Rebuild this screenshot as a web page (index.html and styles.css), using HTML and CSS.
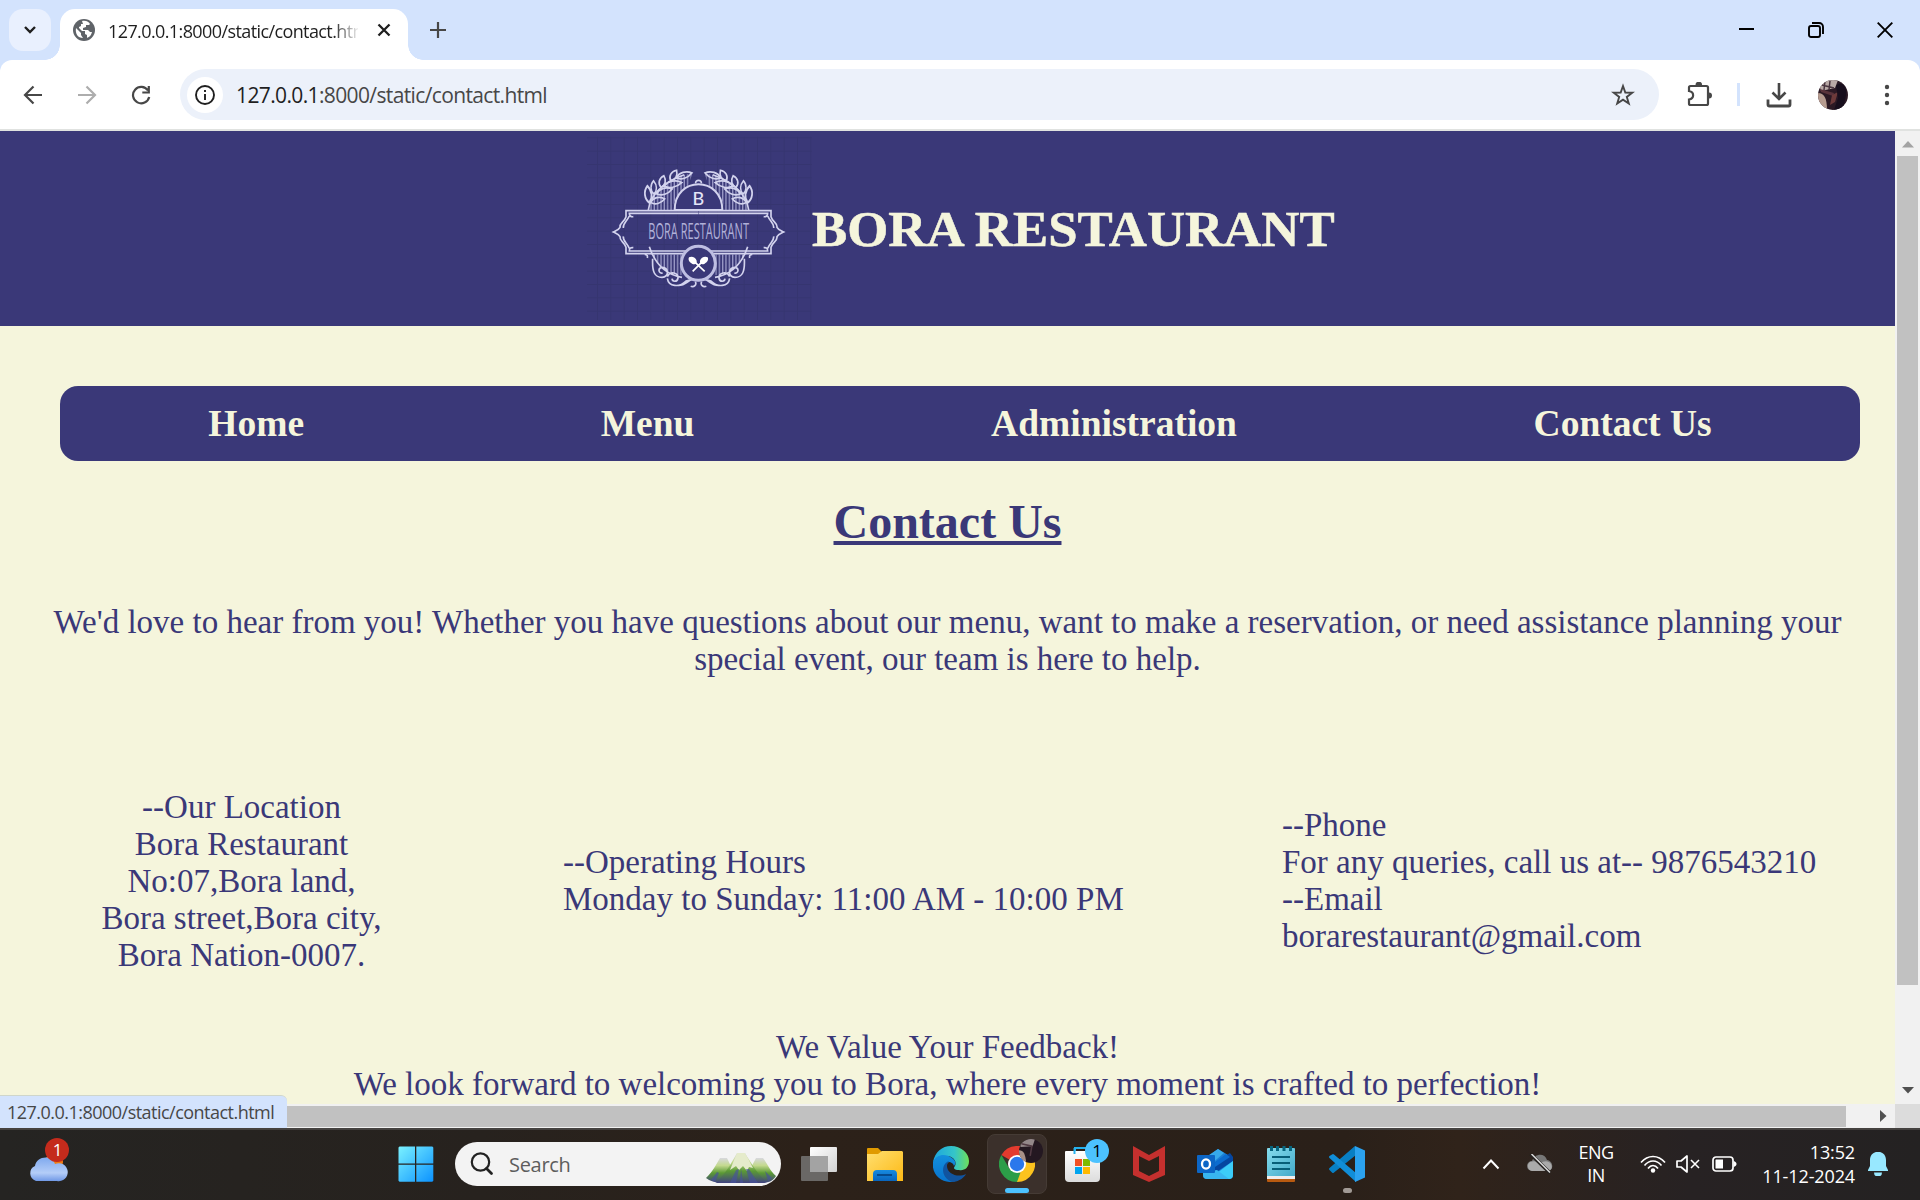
FILE: index.html
```html
<!DOCTYPE html>
<html lang="en">
<head>
<meta charset="utf-8">
<title>127.0.0.1:8000/static/contact.html</title>
<link rel="stylesheet" href="styles.css">
</head>
<body>
<div class="tabstrip">
  <div class="tab-search"><svg width="16" height="16" viewBox="0 0 16 16"><path d="M3 5l5 5 5-5" fill="none" stroke="#1f1f1f" stroke-width="2.4"/></svg></div>
  <div class="tab">
    <svg class="favicon" width="22" height="22" viewBox="0 0 22 22"><circle cx="11" cy="11" r="11" fill="#5f6368"/><path d="M3 9l5 5v2l2 3c-5 0-8-4-7-10zM9 2c4-1 7 1 8 3l-1 1h-3v2l-3 1v2h5l2 2h2c-1 4-3 5-5 6v-3l-2-1v-3H9l-3-3V8l2-1V5h2z" fill="#fff"/></svg>
    <span class="tab-title">127.0.0.1:8000/static/contact.html</span>
    <svg class="tab-close" width="14" height="14" viewBox="0 0 14 14"><path d="M1.5 1.5l11 11m0-11l-11 11" stroke="#1f1f1f" stroke-width="2.3"/></svg>
  </div>
  <svg class="new-tab" width="16" height="16" viewBox="0 0 16 16"><path d="M8 0v16M0 8h16" stroke="#474747" stroke-width="2.2"/></svg>
  <div class="window-buttons">
    <svg width="16" height="16" viewBox="0 0 16 16"><path d="M0 7h15" stroke="#000" stroke-width="2"/></svg>
    <svg width="16" height="16" viewBox="0 0 16 16"><rect x="1" y="4" width="11" height="11" rx="2" fill="none" stroke="#000" stroke-width="1.9"/><path d="M4 1h7c2.500 0 4 1.500 4 4v7" fill="none" stroke="#000" stroke-width="1.900"/></svg>
    <svg width="16" height="16" viewBox="0 0 16 16"><path d="M.7 .7l14.600 14.600m0-14.600L.7 15.300" stroke="#000" stroke-width="1.900"/></svg>
  </div>
</div>
<div class="toolbar-wrap">
<div class="toolbar">
  <div class="nav-buttons">
    <svg width="20" height="20" viewBox="0 0 20 20"><path d="M19 10H2m8.500-8.500L2 10l8.500 8.500" fill="none" stroke="#474747" stroke-width="2.200"/></svg>
    <svg width="20" height="20" viewBox="0 0 20 20"><path d="M1 10h17M9.500 1.500L18 10l-8.500 8.500" fill="none" stroke="#adadad" stroke-width="2.200"/></svg>
    <svg width="20" height="20" viewBox="0 0 20 20"><path d="M17 5.500A8.200 8.200 0 1 0 18.200 12M17.800 1v6.500h-6.500" fill="none" stroke="#474747" stroke-width="2.200"/></svg>
  </div>
  <div class="omnibox">
    <span class="site-info"><svg width="20" height="20" viewBox="0 0 20 20"><circle cx="10" cy="10" r="9" fill="none" stroke="#1f1f1f" stroke-width="1.900"/><path d="M10 9v6M10 5v2" stroke="#1f1f1f" stroke-width="1.900"/></svg></span>
    <span class="url"><b>127.0.0.1</b>:8000/static/contact.html</span>
    <svg class="star" width="24" height="24" viewBox="0 0 24 24"><path d="M12 3l2.300 6.500 7 .2-5.500 4.200 2 6.700L12 16.700l-5.800 3.900 2-6.700-5.500-4.200 7-.2z" fill="none" stroke="#474747" stroke-width="1.900"/></svg>
  </div>
  <svg class="puzzle" width="26" height="26" viewBox="0 0 26 26"><path d="M4 4h15.500a1.500 1.500 0 0 1 1.500 1.500v16a1.500 1.500 0 0 1-1.500 1.500H3.500a1.500 1.500 0 0 1-1.500-1.500V17.500c5.500-1 5.500-7.500 0-8.500V5.500A1.500 1.500 0 0 1 3.500 4z" fill="none" stroke="#474747" stroke-width="2.200"/><path d="M8.500 3a3.300 3.300 0 0 1 6.600 0zM22 10.500a3 3 0 0 1 0 6z" fill="#474747"/></svg>
  <i class="divider"></i>
  <svg class="download" width="26" height="26" viewBox="0 0 26 26"><path d="M13 1v16M6.500 10.500L13 17l6.500-6.500" fill="none" stroke="#474747" stroke-width="2.600"/><path d="M2 17.500v5a1.500 1.500 0 0 0 1.500 1.500h19a1.500 1.500 0 0 0 1.500-1.500v-5" fill="none" stroke="#474747" stroke-width="2.800"/></svg>
  <svg class="avatar" width="30" height="30" viewBox="0 0 30 30"><clipPath id="av"><circle cx="15" cy="15" r="15"/></clipPath><g clip-path="url(#av)"><path d="M0 0h30v30H0z" fill="#2b1924"/><path d="M0 0h20l-3 8-14 3z" fill="#b9a9a6"/><path d="M2 9l14 4-1 3L3 12z" fill="#59333b"/><path d="M0 13c6 0 9 5 9 17H0z" fill="#b69c90"/><path d="M4 5l12 3M7 1l-1 9M12 1l-1 9M22 0l6 8" stroke="#4a3640" stroke-width="1.500"/><path d="M14 15l-2 10 5-3 3-10z" fill="#6d3a3a"/><path d="M18 6c5-6 12 0 10 9l-3 15h-9l4-12z" fill="#170e1c"/></g></svg>
  <svg class="dots" width="6" height="24" viewBox="0 0 6 24"><g fill="#474747"><circle cx="3" cy="4" r="2.200"/><circle cx="3" cy="12" r="2.200"/><circle cx="3" cy="20" r="2.200"/></g></svg>
</div>
</div>

<div class="viewport">
  <div class="page">
    <header class="banner">
      <svg class="logo" width="225" height="195" viewBox="21 3 675 585">
        <defs>
          <pattern id="grid" width="40" height="40" patternUnits="userSpaceOnUse" x="11" y="22"><path d="M1.500 0v40M0 1.500h40" stroke="#33336b" stroke-width="3"/></pattern>
          <pattern id="bars" width="10" height="10" patternUnits="userSpaceOnUse"><path d="M3 0v10" stroke="#a6a6d0" stroke-width="3.500"/></pattern>
          <g id="leaf"><path d="M0 0c-12-9-12-26 1-36 11 12 11 27-1 36z"/></g>
          <g id="half">
            <path d="M206 240c8-55 48-94 132-111l-16 45c-28 16-42 38-44 66z" fill="url(#bars)" stroke="none"/>
            <path d="M205 240c5-42 42-84 108-106"/>
            <use href="#leaf" transform="translate(208 218) rotate(-8) scale(1.100 1.400)"/>
            <use href="#leaf" transform="translate(222 192) rotate(-3) scale(.9 1.100)"/>
            <use href="#leaf" transform="translate(243 172) rotate(12)"/>
            <use href="#leaf" transform="translate(272 152) rotate(28)"/>
            <use href="#leaf" transform="translate(212 217) rotate(75) scale(1 1.200)"/>
            <use href="#leaf" transform="translate(230 191) rotate(72) scale(1 1.350)"/>
            <use href="#leaf" transform="translate(252 168) rotate(78) scale(1 1.500)"/>
            <use href="#leaf" transform="translate(289 143) rotate(72) scale(1 1.350)"/>
            <path d="M355 242H138v18c-5 17-20 18-18 32-4 8-12 10-20 14 8 4 16 6 20 14-2 14 13 15 18 32v19h217M355 250H148c0 7 4 11 12 10M355 363H148c0-8 4-11 12-10M148 258c-8 18-20 22-18 36M148 355c-8-18-20-22-18-36"/>
            <path d="M210 373h95v62c-30 0-64-20-82-55z" fill="url(#bars)" stroke="none"/>
            <path d="M208 350c18 54 50 84 98 92M194 373c8 0 9 5 8 11M218 386c-2 40 6 56 28 56 23 0 20-32 0-30-14 3-10 20 2 17M262 445c4 26 36 28 56 8l20-5M262 440c8-19 34-12 32 4-2 13-17 12-18 2M296 466c18 0 26-12 36-16M332 469c10 4 19-5 14-14"/>
          </g>
        </defs>
        <rect x="21" y="20" width="675" height="550" fill="url(#grid)" opacity=".6"/>
        <g fill="none" stroke="#d3d3ee" stroke-width="5">
          <use href="#half"/><use href="#half" transform="matrix(-1 0 0 1 711 0)"/>
          <path d="M284 240c0-103 143-103 143 0z" fill="#3a3878" stroke-width="6"/>
          <path d="M347 160c-2-12 19-12 17 0"/>
          <circle cx="355" cy="400" r="51" fill="#3a3878" stroke-width="9" stroke="#bebee2"/>
          <path d="M370 392l-32 32M340 392l34 32" stroke="#fff"/>
        </g>
        <path d="M327 382c8-5 20 0 23 10 2 10-6 13-14 9-7-4-13-11-9-19zM383 382c-8-5-20 0-23 10-2 10 6 13 14 9 7-4 13-11 9-19z" fill="#fff"/>
        <text x="355" y="224" class="logo-letter">B</text>
        <text x="205" y="326" class="logo-name" textLength="302" lengthAdjust="spacingAndGlyphs" transform="translate(0 -98) scale(1 1.300)">BORA RESTAURANT</text>
      </svg>
      <h1>BORA RESTAURANT</h1>
    </header>
    <nav class="menu"><a>Home</a><a>Menu</a><a>Administration</a><a>Contact Us</a></nav>
    <h2>Contact Us</h2>
    <p class="intro">We'd love to hear from you! Whether you have questions about our menu, want to make a reservation, or need assistance planning your<br>special event, our team is here to help.</p>
    <section class="details">
      <address class="place">--Our Location<br>Bora Restaurant<br>No:07,Bora land,<br>Bora street,Bora city,<br>Bora Nation-0007.</address>
      <div class="hours">--Operating Hours<br>Monday to Sunday: 11:00 AM - 10:00 PM</div>
      <div class="reach">--Phone<br>For any queries, call us at-- 9876543210<br>--Email<br>borarestaurant@gmail.com</div>
    </section>
    <p class="feedback">We Value Your Feedback!<br>We look forward to welcoming you to Bora, where every moment is crafted to perfection!</p>
  </div>
  <div class="vscroll">
    <svg width="12" height="7" viewBox="0 0 12 7"><path d="M0 6.500L6 0l6 6.500z" fill="#a3a3a3"/></svg>
    <i class="vthumb"></i>
    <svg class="down" width="12" height="7" viewBox="0 0 12 7"><path d="M0 0h12L6 6.500z" fill="#505050"/></svg>
  </div>
  <div class="hscroll"><i class="hthumb"></i><svg width="7" height="12" viewBox="0 0 7 12"><path d="M0 0v12l6.500-6z" fill="#505050"/></svg></div>
  <div class="corner"></div>
  <div class="status">127.0.0.1:8000/static/contact.html</div>
</div>

<div class="taskbar">
  <svg class="weather" width="42" height="46" viewBox="0 0 42 46">
    <defs><linearGradient id="cl" x1="0" y1="0" x2="0" y2="1"><stop offset="0" stop-color="#7fa9ee"/><stop offset=".65" stop-color="#b4cdf8"/><stop offset="1" stop-color="#6f98e6"/></linearGradient></defs>
    <circle cx="26" cy="24" r="9" fill="#f27b13"/><path d="M8 43a8 8 0 0 1-1-15c1-10 17-12 20-2a9 9 0 1 1 2 17z" fill="url(#cl)"/>
    <circle cx="29" cy="12" r="12" fill="#c42b1c"/><text x="29.500" y="18" text-anchor="middle" font-size="17" fill="#fff">1</text>
  </svg>
  <svg class="start" width="36" height="36" viewBox="0 0 36 36"><defs><linearGradient id="win" x1="0" y1="0" x2="36" y2="36" gradientUnits="userSpaceOnUse"><stop offset="0" stop-color="#7cf3ff"/><stop offset="1" stop-color="#0a91ff"/></linearGradient></defs><path d="M1.500.5H17v17H.5v-16zM18.300.5h16l1 1v16h-17zM.5 18.700H17v17H1.500l-1-1zM18.300 18.700h17v16l-1 1h-16z" fill="url(#win)"/></svg>
  <div class="search">
    <svg width="24" height="24" viewBox="0 0 24 24"><circle cx="10.500" cy="10" r="8.700" fill="none" stroke="#222" stroke-width="2.200"/><path d="M16.500 16.500l5 5" stroke="#222" stroke-width="2.800" stroke-linecap="round"/></svg>
    <span>Search</span>
    <svg class="hill" width="72" height="34" viewBox="0 0 72 34">
      <defs><linearGradient id="hl" x1="0" y1="0" x2="0" y2="1"><stop offset="0" stop-color="#d8d8de"/><stop offset=".3" stop-color="#c3d98e"/><stop offset=".6" stop-color="#5b9a34"/><stop offset="1" stop-color="#40427f"/></linearGradient></defs>
      <path d="M1 27C8 20 11 14 15 7h7l12 25H14C9 31 5 30 1 27zM71 25C65 20 62 12 58 7h-7L38 32h19c6 0 11-2 14-7z" fill="url(#hl)"/>
      <path d="M11 32C21 22 27 11 32 2h8c6 10 13 22 22 29l-5 1z" fill="url(#hl)"/>
      <path d="M32 2h8l8 15-4-1-2 4-4-5-4 4-3-4-6 4z" fill="#e5ebcb"/>
      <path d="M31 19l-6 13h6l3-14zM41 18l4 14h8l-9-14zM36 17l-1 15h3zM12 21l-6 8 4 2 4-9zM60 20l3 10 4-3z" fill="#46529b" opacity=".65"/>
    </svg>
  </div>
  <div class="apps">
    <div class="app"><svg width="36" height="36" viewBox="0 0 36 36"><defs><linearGradient id="tv" x1="0" y1="0" x2="1" y2="1"><stop offset="0" stop-color="#fff"/><stop offset="1" stop-color="#d2d2d2"/></linearGradient></defs><rect x="9" y="1" width="27" height="25" rx="1" fill="url(#tv)"/><rect y="10" width="27" height="25" rx="1" fill="#6a6866"/><path d="M9 10h18v16H9z" fill="#a3a3a3"/></svg></div>
    <div class="app"><svg width="36" height="36" viewBox="0 0 36 36"><defs><linearGradient id="fo" x1="0" y1="0" x2="1" y2="1"><stop offset="0" stop-color="#ffdf70"/><stop offset="1" stop-color="#fdb915"/></linearGradient><linearGradient id="fb" x1="0" y1="0" x2="0" y2="1"><stop offset="0" stop-color="#178be0"/><stop offset="1" stop-color="#0965bd"/></linearGradient></defs><path d="M0 3a1 1 0 0 1 1-1h10l4 4v5H0z" fill="#e09a00"/><path d="M0 8h11l4-3h20l1 1v29H0z" fill="url(#fo)"/><path d="M6 35v-7a4 4 0 0 1 4-4h16a4 4 0 0 1 4 4v7z" fill="url(#fb)"/><path d="M10 29h15" stroke="#064a8c" stroke-width="2"/></svg></div>
    <div class="app"><svg width="36" height="36" viewBox="0 0 36 36"><defs><linearGradient id="e1"><stop offset="0" stop-color="#1ca5df"/><stop offset=".6" stop-color="#35c5c8"/><stop offset="1" stop-color="#6ee05a"/></linearGradient><linearGradient id="e2" x1="0" y1="0" x2="0" y2="1"><stop offset="0" stop-color="#138fdd"/><stop offset="1" stop-color="#0873cc"/></linearGradient></defs><path d="M0 16C2 6 9 0 18 0c10 0 18 7 18 15 0 7-5 10-10 9-5 0-6-2-4-4 2-4-1-9-7-10-6 0-11 2-15 6z" fill="url(#e1)"/><path d="M0 16c3-8 13-9 19-4 4 3 4 6 2 8-1-3-3-4-5-4-6 3-5 17 6 19-12 4-24-6-22-19z" fill="url(#e2)"/><path d="M16 15c-9 3-8 19 5 21 5-1 10-4 12-8-8 4-19 0-19-8 0-2 1-4 2-5z" fill="#11549f"/></svg></div>
    <div class="app current"><svg width="36" height="36" viewBox="0 0 36 36"><path d="M18 18L2.400 9A18 18 0 0 1 33.600 9z" fill="#e33b2e"/><path d="M18 18l15.600-9A18 18 0 0 1 18 36z" fill="#fcc31e"/><path d="M2.400 9l8.200 14 7.400 3.500 3.500 0L18 36A18 18 0 0 1 2.400 9z" fill="#2c9d48"/><path d="M18 9h15.600l-7.800 13z" fill="#fcc31e"/><path d="M18 0a18 18 0 0 1 15.600 9H18z" fill="#e33b2e"/><circle cx="18" cy="18" r="9" fill="#fff"/><circle cx="18" cy="18" r="7.200" fill="#2b78ec"/></svg>
      <svg class="mini" width="24" height="24" viewBox="0 0 30 30"><g clip-path="url(#av)"><path d="M0 0h30v30H0z" fill="#241821"/><path d="M0 0h20l-3 9L2 10z" fill="#94888a"/><path d="M0 14c6 0 8 5 9 16H0z" fill="#a99087"/><path d="M3 6l13 3-2 12" stroke="#513a43" stroke-width="2" fill="none"/></g></svg>
      <i class="bar"></i></div>
    <div class="app"><svg width="36" height="36" viewBox="0 0 36 36"><defs><linearGradient id="st" x1="0" y1="0" x2="0" y2="1"><stop offset="0" stop-color="#fff"/><stop offset="1" stop-color="#dcdcdc"/></linearGradient></defs><path d="M10 8V2h15v6" fill="none" stroke="#25b1ec" stroke-width="2"/><path d="M0 6a1 1 0 0 1 1-1h33a1 1 0 0 1 1 1v26a4 4 0 0 1-4 4H4a4 4 0 0 1-4-4z" fill="url(#st)"/><path d="M9.500 2v6" stroke="#25b1ec" stroke-width="2"/><path d="M10 13h7v7h-7z" fill="#f25022"/><path d="M18 13h7v7h-7z" fill="#7fba00"/><path d="M10 21h7v7h-7z" fill="#00a4ef"/><path d="M18 21h7v7h-7z" fill="#ffb900"/></svg><span class="badge">1</span></div>
    <div class="app"><svg width="36" height="36" viewBox="0 0 36 36"><path d="M2 0l16 9 16-9v29l-16 7-16-7zM8 10v15l10 5 10-5V10l-10 5z" fill="#c5302e" fill-rule="evenodd"/></svg></div>
    <div class="app"><svg width="36" height="36" viewBox="0 0 36 36"><path d="M6 14L21 3l15 9v17a4 4 0 0 1-4 4H10a4 4 0 0 1-4-4z" fill="#1b7fd6"/><path d="M9 11L21 3l6 4-14 12z" fill="#36a9ea"/><path d="M17 17L33 7l3 4v4L18 27z" fill="#0546a0"/><path d="M17 17L29 8l4 3-15 10z" fill="#0b6cd0"/><path d="M36 15v14a4 4 0 0 1-4 4H12z" fill="#3ccdf8"/><path d="M6 26l14-2 12 9H10a4 4 0 0 1-4-4z" fill="#38b6f0"/><rect y="9" width="18" height="18" rx="1" fill="#0c66c6"/><ellipse cx="9" cy="18" rx="4" ry="4.700" fill="none" stroke="#fff" stroke-width="2.300"/></svg></div>
    <div class="app"><svg width="36" height="36" viewBox="0 0 36 36"><defs><linearGradient id="np" x1="0" y1="0" x2="1" y2="1"><stop offset="0" stop-color="#85dced"/><stop offset="1" stop-color="#43aac9"/></linearGradient></defs><path d="M4 29h28v6a1 1 0 0 1-1 1H5a1 1 0 0 1-1-1z" fill="#b85a10"/><path d="M4 28h28v5H4z" fill="#eee"/><path d="M4 3a1 1 0 0 1 1-1h26a1 1 0 0 1 1 1v27H4z" fill="url(#np)"/><path d="M9 11h18M9 17h18M9 23h18" stroke="#075e78" stroke-width="2"/><path d="M8.500 0v5M14.500 0v5M21 0v5M27.500 0v5" stroke="#07657e" stroke-width="3"/></svg></div>
    <div class="app"><svg width="36" height="36" viewBox="0 0 36 36"><path d="M26 0l1 9L5 26.500q-1 1-2 0L.5 24q-1-1 0-2z" fill="#087fc4"/><path d="M.5 12q-1-1 0-2L3 8.500q1-1 2 0L27 27v9z" fill="#118ed8"/><path d="M26 0l10 4.500v27L26 36z" fill="#2ba2ef"/></svg><i class="running"></i></div>
  </div>
  <div class="tray">
    <svg class="up" width="18" height="12" viewBox="0 0 18 12"><path d="M1.500 10.500L9 2.500l7.500 8" fill="none" stroke="#fff" stroke-width="2"/></svg>
    <svg class="cloud" width="26" height="20" viewBox="0 0 26 20"><path d="M5 17a5 5 0 0 1 0-10c3-8 13-8 15-1 7 1 7 11 0 11z" fill="#777"/><path d="M5 17a5 5 0 0 1-2-9c5-2 8 0 10 2 4-4 9-3 11 0 2 4 0 7-4 7z" fill="#aaa"/><path d="M3.500 0l19.500 19" stroke="#25211f" stroke-width="3.500"/><path d="M4.500 0L23 18.500" stroke="#ddd" stroke-width="1.500"/></svg>
    <div class="lang">ENG<br>IN</div>
    <svg class="wifi" width="26" height="18" viewBox="0 0 26 18"><g fill="none" stroke="#fff" stroke-width="1.700"><path d="M1 7.500c7-8 17-8 24 0M4.500 10.500c5-6 12-6 17 0M8 13.500c3-4 7-4 10 0"/></g><circle cx="13" cy="15.500" r="2.200" fill="#fff"/></svg>
    <svg class="mute" width="24" height="18" viewBox="0 0 24 18"><path d="M1 6h4l6-5v16l-6-5H1z" fill="none" stroke="#fff" stroke-width="1.700" stroke-linejoin="round"/><path d="M15 5l8 8m0-8l-8 8" stroke="#fff" stroke-width="1.600"/></svg>
    <svg class="battery" width="25" height="16" viewBox="0 0 25 16"><rect x="1" y="1" width="20" height="14" rx="3" fill="none" stroke="#fff" stroke-width="1.700"/><path d="M3.500 4q0-.5.5-.5h7v9H4q-.5 0-.5-.5z" fill="#fff"/><path d="M21.500 5c4 1 4 5 0 6z" fill="#fff"/></svg>
    <div class="clock">13:52<br>11-12-2024</div>
    <svg class="bell" width="20" height="24" viewBox="0 0 20 24"><path d="M2 8c0-11 16-11 16 0v6l2 4v1H0v-1l2-4zM6 20.500h8a4 4 0 0 1-8 0z" fill="#98e8ff"/></svg>
  </div>
</div>
</body>
</html>
```
FILE: styles.css
```css
* { box-sizing: border-box; }
svg { display: block; flex: none; }
body {
  margin: 0; width: 1920px; height: 1200px; overflow: hidden;
  display: flex; flex-direction: column;
  font-family: "Open Sans", "Noto Sans", sans-serif;
}
.tabstrip { height: 60px; background: #d3e3fd; display: flex; align-items: center; padding-left: 9px; flex: none; }
.tab-search { width: 42px; height: 42px; border-radius: 14px; background: #e9f0fe; display: grid; place-items: center; }
.tab {
  position: relative; width: 348px; height: 51px; margin: 9px 0 0 9px; padding: 0 17px 9px 13px;
  background: #fff; border-radius: 15px 15px 0 0; display: flex; align-items: center;
}
.tab::before, .tab::after { content: ""; position: absolute; bottom: 0; width: 15px; height: 15px; }
.tab::before { left: -15px; background: radial-gradient(circle at 0 0, transparent 14.500px, #fff 15px); }
.tab::after { right: -15px; background: radial-gradient(circle at 100% 0, transparent 14.500px, #fff 15px); }
.tab-title {
  margin: 2px 0 0 13px; width: 250px; overflow: hidden; white-space: nowrap; font-size: 18px; line-height: 26px;
  letter-spacing: -.6px; color: #1f1f1f;
  -webkit-mask-image: linear-gradient(90deg, #000 225px, transparent 252px);
  mask-image: linear-gradient(90deg, #000 225px, transparent 252px);
}
.tab-close { margin-left: auto; }
.new-tab { margin-left: 22px; }
.window-buttons { display: flex; gap: 53px; margin-left: auto; margin-right: 27px; }

.toolbar-wrap { background: #d3e3fd; flex: none; }
.toolbar { height: 71px; background: #fff; border-bottom: 2px solid #e0e2e0; border-radius: 12px 12px 0 0; display: flex; align-items: center; padding: 0 30px 0 23px; }
.nav-buttons { display: flex; gap: 34px; margin-right: 29px; }
.omnibox { width: 1479px; height: 51px; border-radius: 26px; background: #ecf1fa; display: flex; align-items: center; padding: 0 24px 0 7px; }
.site-info { width: 36px; height: 36px; border-radius: 50%; background: #fff; display: grid; place-items: center; }
.url { margin-left: 13px; font-size: 21px; letter-spacing: -.63px; color: #474747; }
.url b { font-weight: 400; color: #1f1f1f; }
.star { margin-left: auto; }
.puzzle { margin-left: 28px; }
.divider { width: 3px; height: 23px; background: #d3e3fd; margin-left: 24px; }
.download { margin-left: 26px; }
.avatar { margin-left: 26px; }
.dots { margin-left: 36px; }

.viewport { position: relative; height: 997px; flex: none; display: grid; grid-template: 973px 24px / 1895px 25px; background: #f5f5dc; }
.page { overflow: hidden; font-family: "Liberation Serif", serif; color: #3a3878; font-size: 33px; line-height: 37px; }
.banner { height: 195px; background: #3a3878; color: #f5f5dc; display: flex; align-items: center; padding-left: 587px; }
.banner h1 { margin: 0; font-size: 50px; white-space: nowrap; line-height: 58px; transform: scaleX(1.056); transform-origin: 0 50%; -webkit-text-stroke: .5px #f5f5dc; }
.logo-letter { font: 500 54px Lato, sans-serif; fill: #e4e4f6; text-anchor: middle; }
.logo-name { font: 500 52px "Open Sans", sans-serif; fill: #b0b0d8; }
.menu { width: 1800px; height: 75px; margin: 60px 0 0 60px; border-radius: 18px; background: #3a3878; color: #f5f5dc; display: flex; justify-content: space-around; align-items: center; font-size: 37.500px; font-weight: 700; }
h2 { margin: 33px 0 0; text-align: center; font-size: 48px; line-height: 55px; text-decoration: underline; }
.intro { margin: 55px 0 0; text-align: center; white-space: nowrap; }
.details { display: flex; align-items: center; margin-top: 111px; padding-left: 101px; white-space: nowrap; }
.place { width: 281px; text-align: center; font-style: normal; }
.hours { margin-left: 181px; width: 719px; }
.hours, .reach { padding-bottom: 2px; }
.feedback { margin: 55px 0 0; text-align: center; white-space: nowrap; }
.vscroll { background: #f1f1f1; display: flex; flex-direction: column; align-items: center; padding: 10px 0 10px; }
.vthumb { width: 21px; height: 829px; background: #c1c1c1; margin-top: 8px; }
.down { margin-top: auto; }
.hscroll { background: #f1f1f1; display: flex; align-items: center; padding-right: 8px; justify-content: space-between; }
.hthumb { width: 1846px; height: 21px; background: #c1c1c1; }
.corner { background: #dcdcdc; }
.status { position: absolute; left: 0; bottom: 0; width: 287px; height: 33px; background: #d3e3fd; border-top: 1px solid #cfd6cb; border-radius: 0 6px 0 0; padding-left: 7px; font-size: 18px; line-height: 33px; letter-spacing: -.52px; color: #474747; white-space: nowrap; }

.taskbar { height: 72px; padding-bottom: 2px; border-top: 2px solid #454240; display: flex; align-items: center; color: #fff; background: linear-gradient(90deg, #252422, #27221e 25%, #2c2119 42%, #2a2019 70%, #30231a 76%, #272223 88%, #242222); }
.weather { margin: -7px 0 0 28px; }
.start { margin-left: 328px; }
.search { width: 326px; height: 44px; margin-left: 21px; border-radius: 22px; background: #f3f3f3; display: flex; align-items: center; padding: 0 4px 0 15px; color: #5d5d5d; font-size: 20px; letter-spacing: -.3px; }
.search span { margin-left: 15px; }
.hill { margin: 8px 0 0 auto; }
.apps { display: flex; margin-left: 5px; }
.app { position: relative; width: 66px; height: 60px; display: grid; place-items: center; }
.current { width: 60px; margin: 0 3px; border-radius: 8px; background: #3b302b; border: 1px solid #453b35; }
.mini { position: absolute; left: 31px; top: 4px; }
.bar { position: absolute; left: 17px; bottom: 0; width: 24px; height: 5px; border-radius: 3px; background: #4cc2ff; }
.badge { position: absolute; left: 35px; top: 5px; width: 24px; height: 24px; border-radius: 50%; background: #4cc2ff; color: #000; font-size: 17px; line-height: 24px; text-align: center; }
.running { position: absolute; left: 29px; bottom: 1px; width: 9px; height: 5px; border-radius: 3px; background: #a19a95; }
.tray { flex: 1; display: flex; align-items: center; font-size: 18px; line-height: 24px; }
.up { margin-left: 102px; }
.cloud { margin-left: 27px; }
.lang { margin: 0 0 0 21px; width: 44px; text-align: center; letter-spacing: -.5px; line-height: 23px; }
.wifi { margin-left: 22px; }
.mute { margin-left: 10px; }
.battery { margin-left: 12px; }
.clock { margin-left: auto; text-align: right; letter-spacing: -.12px; }
.bell { margin: 0 32px 0 13px; }
```
